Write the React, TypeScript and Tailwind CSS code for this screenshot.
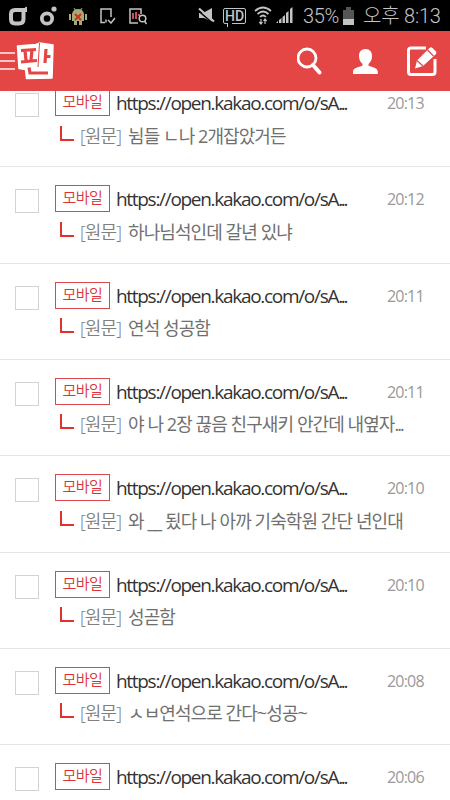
import React from 'react';

const url = 'https://open.kakao.com/o/sA';

const rows = [
  { time: '20:13', text: '뉨들 ㄴ나 2개잡았거든' },
  { time: '20:12', text: '하나님석인데 갈년 있냐' },
  { time: '20:11', text: '연석 성공함' },
  { time: '20:11', text: '야 나 2장 끊음 친구새키 안간데 내옆자', cut: true },
  { time: '20:10', text: '와 __ 됬다 나 아까 기숙학원 간단 년인대' },
  { time: '20:10', text: '성곧함' },
  { time: '20:08', text: 'ㅅㅂ연석으로 간다~성공~' },
  { time: '20:06', text: '' },
];

function StatusBar() {
  return (
    <div className="flex h-[31px] shrink-0 items-center bg-black pl-[9px] text-[#c4c4c4]">
      <svg className="h-5 w-[18px]" viewBox="0 0 18 20" fill="none" stroke="currentColor" strokeWidth="4">
        <path d="M18 4H6Q2 4 2 8V13Q2 17.500 6 17.500H10Q14.500 17.500 14.500 13V4" />
        <path d="M14 4Q17 4 17.500 1" strokeWidth="2" />
      </svg>
      <svg className="ml-[12px] h-5 w-[18px]" viewBox="0 0 18 20" fill="none">
        <circle cx="8" cy="12.500" r="5.200" stroke="currentColor" strokeWidth="3.700" />
        <circle cx="15" cy="3" r="2.600" fill="currentColor" />
      </svg>
      <svg className="ml-[12px] h-[18px] w-[18px]" viewBox="0 0 18 18">
        <path d="M5 1l2 3M13 1l-2 3" stroke="#8c9a65" strokeWidth="1.200" />
        <path d="M3 7Q4 2 9 2t6 5zM3 7h12v7H3zM0 7h2v6H0zM16 7h2v6h-2zM5 14h3v4H5zM10 14h3v4h-3z" fill="#a3ab78" />
        <path d="M6 7l6 6M12 7l-6 6" stroke="#c73318" strokeWidth="2" />
      </svg>
      <svg className="ml-[12px] h-4 w-[17px]" viewBox="0 0 17 16" fill="none" stroke="currentColor" strokeWidth="1.500">
        <path d="M6 14.500H2V1H12V9M7 11.500v3M9 12l3 3 4-5" />
      </svg>
      <svg className="ml-[13px] h-[18px] w-[18px]" viewBox="0 0 18 18" fill="none" stroke="currentColor" strokeWidth="1.500">
        <path d="M9 16H1V2H12V7" />
        <path d="M4 12V6M7 12V5M10 9V7" stroke="#d85066" strokeWidth="1.900" />
        <circle cx="13.500" cy="11.500" r="3.300" />
        <path d="M15.500 14l2 3" />
      </svg>
      <svg className="ml-[51px] h-[17px] w-[18px]" viewBox="0 0 18 17">
        <path d="M1 6h4l9-5v14l-8-4H1z" fill="currentColor" />
        <path d="M0 3.500l14 12" stroke="#000" strokeWidth="1.500" />
        <path d="M1 1.500l15 13" stroke="currentColor" strokeWidth="2.200" />
      </svg>
      <div className="relative ml-[7px] flex h-4 w-[23px] items-center justify-center rounded-[2px] border border-[#c4c4c4] font-['Roboto'] text-[14px] font-medium leading-[14px]">
        HD
        <span className="absolute -bottom-[4px] left-[3px] h-[4px] w-[5px] border-l border-[#c4c4c4] bg-black" />
      </div>
      <svg className="ml-[8px] h-[19px] w-[18px]" viewBox="0 0 18 19" fill="none" stroke="currentColor" strokeWidth="1.700">
        <path d="M1 5Q9-2 17 5M3.500 8Q9 3 14.500 8M6 11Q9 8 12 11" />
        <path d="M7 13v5M5.300 16L7 18l1.500-2M11 18v-5M9.500 15l1.500-2 1.700 2" strokeWidth="1.200" />
      </svg>
      <svg className="ml-[4px] h-[17px] w-[17px]" viewBox="0 0 17 17" fill="currentColor">
        <path d="M0 16l2-2v2zM3 16v-3l2.500-2v5zM6.500 16v-6L9 8v8zM10 16V6l2.500-2v12zM14 16V2l2.500-2v16z" />
      </svg>
      <span className="ml-[10px] w-[37px] whitespace-nowrap font-['Roboto'] text-[20px] font-light tracking-[-0.4px]">35%</span>
      <div className="ml-[3px] flex flex-col items-center">
        <span className="h-[3px] w-[5px] bg-[#555]" />
        <span className="h-[9px] w-[11px] bg-[#555]" />
        <span className="h-[6px] w-[11px] bg-[#c4c4c4]" />
      </div>
      <span className="ml-[9px] whitespace-nowrap font-['Roboto','Noto_Sans_CJK_KR',sans-serif] text-[20px] font-light leading-[30px] tracking-[-0.200px]">오후 8:13</span>
    </div>
  );
}

function Header() {
  return (
    <header className="flex h-[60px] shrink-0 items-center bg-[#e44645] text-white">
      <div className="flex w-[15px] flex-col gap-[6px]">
        <span className="h-[2px] bg-[#f9c5c5]" />
        <span className="h-[2px] bg-[#f9c5c5]" />
        <span className="h-[2px] bg-[#f9c5c5]" />
      </div>
      <svg className="ml-[1px] h-[40px] w-[40px]" viewBox="0 0 40 40">
        <path d="M1.500 5L20 3.500 24 2 37 4 36 37 10.500 37.500 9.500 28.500 3 27.500z" fill="#fff" stroke="#fff" strokeWidth="1.500" strokeLinejoin="round" />
        <g stroke="#e44645" strokeWidth="3.200" fill="none">
          <path d="M5 9.500L20 8.500M9 9.500l1 10M16 9l-1 10M5 21l16-1.500" />
          <path d="M30 8l-1 14M30 15.500h4.500" />
          <path d="M13 26.500l1 5.500h18" />
          <path d="M23.500 2l-1.500 24" strokeWidth="1" />
        </g>
      </svg>
      <svg className="ml-[241px] h-[30px] w-[26px]" viewBox="0 0 26 30" fill="none" stroke="#fff">
        <circle cx="10" cy="12" r="9" strokeWidth="2.800" />
        <path d="M16 19l6.500 7.500" strokeWidth="4" strokeLinecap="round" />
      </svg>
      <svg className="ml-[30px] h-[27px] w-[26px]" viewBox="0 0 26 27" fill="#fff">
        <path d="M12.500 1c4.500 0 6.500 3 6.500 7s-1.500 6-3.500 8v1.500c2 1.500 9.300 2 9.300 6V26H0v-2.500c0-4 7.500-4.500 9.500-6V16c-2-2-3.500-4-3.500-8S8 1 12.500 1z" />
      </svg>
      <svg className="ml-[27px] h-[32px] w-[32px]" viewBox="0 0 32 32" fill="none">
        <path d="M20 3H5Q2.500 3 2.500 5.500V27Q2.500 29.500 5 29.500H26.500Q29 29.500 29 27V14" stroke="#fff" strokeWidth="3" />
        <path d="M9 23.500l2-8L23.500 3Q25 1.500 26.500 3L30 6.500Q31 8 29.500 9.500L17 21z" fill="#fff" />
        <path d="M11 15.500l6 5.500M21.500 5l6 6" stroke="#e44645" strokeWidth="1.200" />
      </svg>
    </header>
  );
}

function Row({ time, text, cut }: { time: string; text: string; cut?: boolean }) {
  return (
    <li className="flex h-[96.33px] shrink-0 items-start border-b-[1px] border-[#e5e5e5] pl-[15px]">
      <span className="mt-[22px] h-6 w-6 shrink-0 border border-[#d3d3d3]" />
      <div className="ml-[16px] w-[332px] pt-[18px]">
        <div className="flex h-[27px]">
          <span className="h-[27px] w-[55px] shrink-0 border border-[#d9494b] pl-[6.500px] font-['Noto_Sans_CJK_KR',sans-serif] text-[15px] font-[350] leading-[21px] tracking-[-0.600px] text-[#dc3337]">모바일</span>
          <span className="ml-[6px] whitespace-nowrap font-['Open_Sans',sans-serif] text-[19px] leading-[29px] tracking-[-1.300px] text-[#333]">
            {url}<span className="tracking-[-2.300px]">...</span>
          </span>
        </div>
        {text && (
          <div className="mt-[6.500px] flex h-[27px] pl-[5px]">
            <span className="mt-[3px] h-[15px] w-[14px] shrink-0 border-b-2 border-l-2 border-[#dd3430]" />
            <span className="ml-[6px] w-[48px] shrink-0 whitespace-nowrap font-['Open_Sans','Noto_Sans_CJK_KR',sans-serif] text-[18px] font-[350] leading-[27px] tracking-[-0.900px] text-[#808080]">[원문]</span>
            <span className="whitespace-nowrap font-['Open_Sans','Noto_Sans_CJK_KR',sans-serif] text-[18px] font-normal leading-[27px] tracking-[-0.920px] text-[#707070]">
              {text}{cut && <span className="tracking-[-2px]">...</span>}
            </span>
          </div>
        )}
      </div>
      <time className="mt-[20px] whitespace-nowrap font-['Open_Sans',sans-serif] text-[16px] font-normal leading-[24px] tracking-[-0.800px] text-[#999]">{time}</time>
    </li>
  );
}

export default function App() {
  return (
    <div className="flex h-[800px] w-[450px] flex-col overflow-hidden bg-white">
      <StatusBar />
      <Header />
      <main className="min-h-0 flex-1 overflow-hidden">
        <ul className="-mt-[20px] flex flex-col">
          {rows.map((row, i) => (
            <Row key={i} {...row} />
          ))}
        </ul>
      </main>
    </div>
  );
}
